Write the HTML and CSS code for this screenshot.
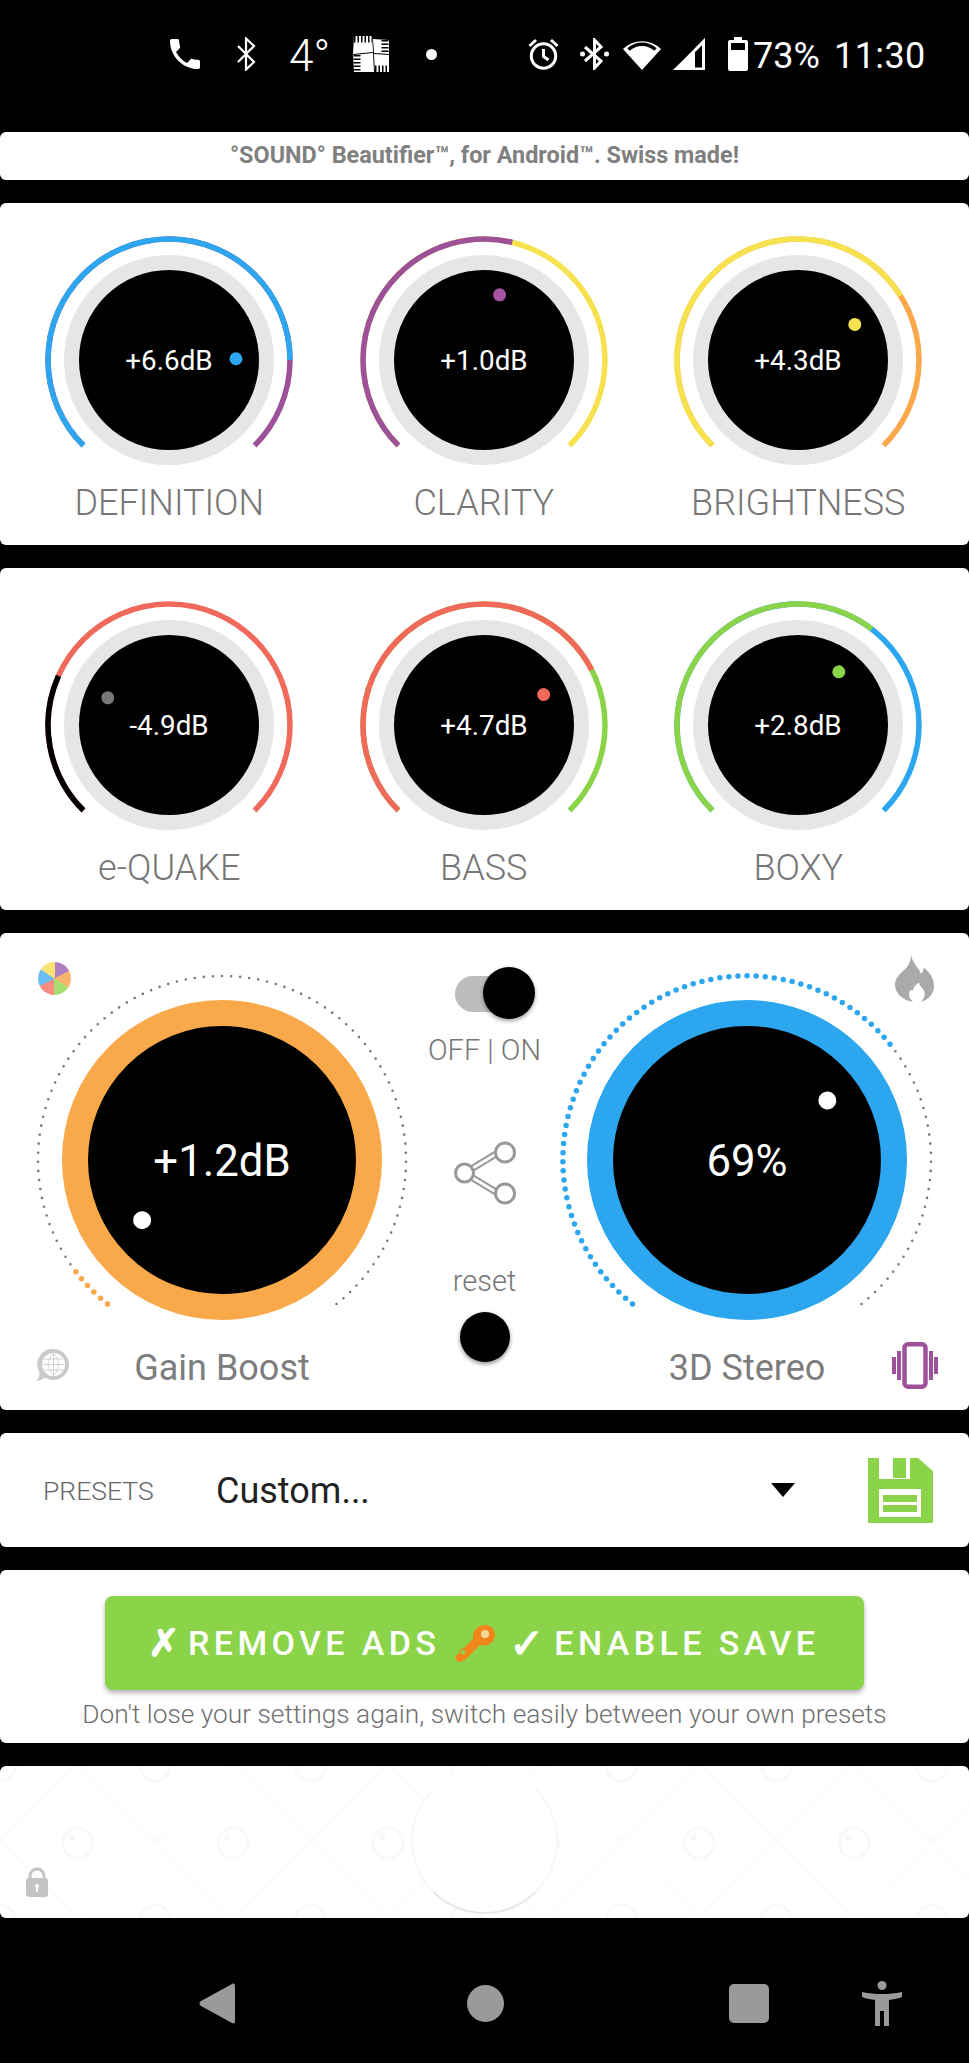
FILE: index.html
```html
<!DOCTYPE html>
<html lang="en">
<head>
<meta charset="utf-8">
<title>SOUND Beautifier</title>
<link rel="stylesheet" href="styles.css">
</head>
<body>
<header class="status">
  <svg class="st-phone" viewBox="3 3 18 18" width="30" height="30"><path class="w" d="M6.62 10.79c1.44 2.83 3.76 5.14 6.59 6.59l2.2-2.2c.27-.27.67-.36 1.02-.24 1.12.37 2.33.57 3.57.57.55 0 1 .45 1 1V20c0 .55-.45 1-1 1-9.39 0-17-7.61-17-17 0-.55.45-1 1-1h3.5c.55 0 1 .45 1 1 0 1.25.2 2.45.57 3.57.11.35.03.74-.25 1.02l-2.2 2.2z"/></svg>
  <svg class="st-bt" viewBox="0 0 19 34" width="19" height="34"><path class="wl" d="M1 9 L17 25 L9 32.5 V1.5 L17 9 L1 25"/></svg>
  <span class="st-temp">4°</span>
  <svg class="st-quilt" viewBox="0 0 36 36" width="36" height="36">
    <path class="w" d="M1 0 H19 L20 16 L0 18Z"/><path class="w" d="M20 3 L36 4 V18 L21 17Z"/><path class="w" d="M0 19 L20 17 L21 36 H1Z"/><path class="w" d="M21 18 L36 19 V36 H22Z"/>
    <path class="fringe" d="M1 3 H19 M32 4 V18 M4 19 V35 M22 33 H36"/>
  </svg>
  <span class="st-dot"></span>
  <svg class="st-alarm" viewBox="0 0 31 32" width="31" height="32"><circle class="wl3" cx="15.5" cy="18" r="12.2"/><path class="wl3" d="M15.5 11 V18.5 L20.5 22 M1.5 8 L8 2 M29.5 8 L23 2"/></svg>
  <svg class="st-btc" viewBox="0 0 29 32" width="29" height="32"><path class="wl3" d="M5 9 L21 23 L14.5 30 V2 L21 9 L5 23"/><circle class="w" cx="2.5" cy="16" r="2.5"/><circle class="w" cx="26.5" cy="16" r="2.5"/></svg>
  <svg class="st-wifi" viewBox="0 0 38 32" width="38" height="32"><path class="w" d="M0 11 A27 27 0 0 1 38 11 L19 32Z"/><path class="gap" d="M5.5 11.5 A20 20 0 0 1 32.500 11.5"/></svg>
  <svg class="st-signal" viewBox="0 0 32 32" width="32" height="32"><path class="wl2" d="M30.500 3.500 V31 H3.500Z"/><path class="w" d="M22 11 V32 H0Z"/></svg>
  <svg class="st-batt" viewBox="0 0 20 34" width="20" height="34"><path class="w" d="M6 0 H14 V3 H18 A2 2 0 0 1 20 5 V32 A2 2 0 0 1 18 34 H2 A2 2 0 0 1 0 32 V5 A2 2 0 0 1 2 3 H6Z"/><rect class="blk" x="3" y="6" width="14" height="7"/></svg>
  <span class="st-pct">73%</span>
  <span class="st-time">11:30</span>
</header>

<main class="cards">
  <div class="card banner">°SOUND° Beautifier™, for Android™. Swiss made!</div>

  <section class="card knobs">
    <div class="knob">
      <svg viewBox="-125 -125 250 250" width="250" height="250">
        <path class="arc c-purple" d="M-85.56 85.56 A121 121 0 1 1 85.56 85.56"/>
        <path class="arc c-blue" pathLength="270" stroke-dasharray="225 999" d="M-85.56 85.56 A121 121 0 1 1 85.56 85.56"/>
        <circle class="ring" r="97.500"/>
        <text class="val" y="9.500">+6.6dB</text>
        <circle class="f-blue" cy="-67" r="6.500" transform="rotate(89)"/>
      </svg>
      <div class="name">DEFINITION</div>
    </div>
    <div class="knob">
      <svg viewBox="-125 -125 250 250" width="250" height="250">
        <path class="arc c-yellow" d="M-85.56 85.56 A121 121 0 1 1 85.56 85.56"/>
        <path class="arc c-purple" pathLength="270" stroke-dasharray="148.500 999" d="M-85.56 85.56 A121 121 0 1 1 85.56 85.56"/>
        <circle class="ring" r="97.500"/>
        <text class="val" y="9.500">+1.0dB</text>
        <circle class="f-purple" cy="-67" r="6.500" transform="rotate(13.500)"/>
      </svg>
      <div class="name">CLARITY</div>
    </div>
    <div class="knob">
      <svg viewBox="-125 -125 250 250" width="250" height="250">
        <path class="arc c-orange" d="M-85.56 85.56 A121 121 0 1 1 85.56 85.56"/>
        <path class="arc c-yellow" pathLength="270" stroke-dasharray="193 999" d="M-85.56 85.56 A121 121 0 1 1 85.56 85.56"/>
        <circle class="ring" r="97.500"/>
        <text class="val" y="9.500">+4.3dB</text>
        <circle class="f-yellow" cy="-67" r="6.500" transform="rotate(58)"/>
      </svg>
      <div class="name">BRIGHTNESS</div>
    </div>
  </section>

  <section class="card knobs">
    <div class="knob">
      <svg viewBox="-125 -125 250 250" width="250" height="250">
        <path class="arc c-red" d="M-85.56 85.56 A121 121 0 1 1 85.56 85.56"/>
        <path class="arc c-black" pathLength="270" stroke-dasharray="69 999" d="M-85.56 85.56 A121 121 0 1 1 85.56 85.56"/>
        <circle class="ring" r="97.500"/>
        <text class="val" y="9.500">-4.9dB</text>
        <circle class="f-grey" cy="-67" r="6.500" transform="rotate(-66)"/>
      </svg>
      <div class="name">e-QUAKE</div>
    </div>
    <div class="knob">
      <svg viewBox="-125 -125 250 250" width="250" height="250">
        <path class="arc c-green" d="M-85.56 85.56 A121 121 0 1 1 85.56 85.56"/>
        <path class="arc c-red" pathLength="270" stroke-dasharray="198 999" d="M-85.56 85.56 A121 121 0 1 1 85.56 85.56"/>
        <circle class="ring" r="97.500"/>
        <text class="val" y="9.500">+4.7dB</text>
        <circle class="f-red" cy="-67" r="6.500" transform="rotate(63)"/>
      </svg>
      <div class="name">BASS</div>
    </div>
    <div class="knob">
      <svg viewBox="-125 -125 250 250" width="250" height="250">
        <path class="arc c-blue" d="M-85.56 85.56 A121 121 0 1 1 85.56 85.56"/>
        <path class="arc c-green" pathLength="270" stroke-dasharray="172.500 999" d="M-85.56 85.56 A121 121 0 1 1 85.56 85.56"/>
        <circle class="ring" r="97.500"/>
        <text class="val" y="9.500">+2.8dB</text>
        <circle class="f-green" cy="-67" r="6.500" transform="rotate(37.500)"/>
      </svg>
      <div class="name">BOXY</div>
    </div>
  </section>

  <section class="card main">
    <span class="pie"></span>
    <svg class="flame" viewBox="0 0 39 47" width="39" height="47"><path class="f-flame" d="M16 0 C18 9 24 13 26 19 C28 17 28.500 15 28.500 12.500 C35 17 39 24 39 31 C39 38 35 44 26 47 C30.500 42 31 37 27 33 C25.500 31.500 24.500 30 24 27.500 C20 30 18 33 18 35.500 C15 34 14 37 14 39 C14 42 16 45 18 47 C7 45 0 38 0 30 C0 21 8 17 12 12 C14.500 8.500 16 5 16 0Z"/></svg>
    <svg class="globe" viewBox="0 0 33 32" width="33" height="32">
      <path class="f-globe" d="M17.500 0 A15.500 15.500 0 1 1 9 28.500 C6 31 3 32 0 32 C2.500 30 3.500 27.500 3.500 23.500 A15.500 15.500 0 0 1 17.500 0Z"/>
      <circle class="f-white" cx="17.500" cy="15.500" r="11.500"/>
      <path class="globe-grid" d="M6.500 15.500 H28.500 M8 10 H27 M8 21 H27 M17.500 4.500 V26.500 M17.500 4.500 C11 9 11 22 17.500 26.500 M17.500 4.500 C24 9 24 22 17.500 26.500"/>
    </svg>
    <svg class="vibe" viewBox="0 0 46 47" width="46" height="47"><rect class="vibe-phone" x="12.500" y="2.250" width="21" height="42.500" rx="3.500"/><path class="vibe-bars" d="M7 9 V38 M2 15 V32 M39 9 V38 M44 15 V32"/></svg>

    <div class="big">
      <svg viewBox="-190 -190 380 380" width="380" height="380">
        <path class="tick" pathLength="100" d="M-114.500 144 A184 184 0 1 1 114.500 144"/>
        <path class="tick-on c-orange" pathLength="5" d="M-114.500 144 A184 184 0 0 1 -146.200 111.700"/>
        <circle class="big-ring c-orange" r="147"/>
        <text class="big-val" y="16">+1.2dB</text>
        <circle class="f-white" cy="-100" r="9" transform="rotate(-127)"/>
      </svg>
      <div class="big-name">Gain Boost</div>
    </div>

    <div class="mid">
      <div class="toggle"><span class="track"></span><span class="thumb"></span></div>
      <div class="mid-label onoff">OFF | ON</div>
      <svg class="share" viewBox="0 0 62 64" width="62" height="64">
        <path class="share-edge" d="M18 27.500 L42 13 M18 36.500 L42 51"/>
        <path class="share-core" d="M18 27.500 L42 13 M18 36.500 L42 51"/>
        <circle class="share-node" cx="10.500" cy="32" r="9"/><circle class="share-node" cx="51" cy="11.500" r="9.500"/><circle class="share-node" cx="51" cy="52.500" r="9.500"/>
      </svg>
      <div class="mid-label reset">reset</div>
      <span class="reset-btn"></span>
    </div>

    <div class="big">
      <svg viewBox="-190 -190 380 380" width="380" height="380">
        <path class="tick" pathLength="100" d="M-114.500 144 A184 184 0 1 1 114.500 144"/>
        <path class="tick-on c-blue" pathLength="69" d="M-114.500 144 A184 184 0 1 1 148.500 -108.600"/>
        <circle class="big-ring c-blue" r="147"/>
        <text class="big-val" y="16">69%</text>
        <circle class="f-white" cy="-100" r="9" transform="rotate(53.500)"/>
      </svg>
      <div class="big-name">3D Stereo</div>
    </div>
  </section>

  <section class="card presets">
    <span class="presets-label">PRESETS</span>
    <span class="presets-value">Custom...</span>
    <span class="caret"></span>
    <svg class="floppy" viewBox="0 0 65 65" width="65" height="65">
      <path class="f-green" d="M0 0 H50 L65 13 V65 H0Z"/>
      <path class="f-white" d="M11 0 H42 V21 H11Z"/>
      <rect class="f-green" x="25" y="0" width="13" height="20"/>
      <rect class="f-white" x="11" y="31" width="42" height="28"/>
      <rect class="f-green" x="15" y="37" width="34" height="7"/>
      <rect class="f-green" x="15" y="47" width="34" height="7"/>
    </svg>
  </section>

  <section class="card upsell">
    <div class="buy">
      <span class="glyph glyph-x">✗</span>
      <span class="buy-text">REMOVE ADS</span>
      <svg class="key" viewBox="0 0 41 38" width="41" height="38"><path class="key-fill" d="M1 33 L19 15 C18 7 24 1 31 1 C37 1 41 5 41 11 C41 18 34 23 26 21 L11 36 L6 38 L3 37Z M5 27 L9 31 L12 28 L8 24Z"/><circle class="key-hole" cx="31" cy="10" r="4"/></svg>
      <span class="glyph glyph-check">✓</span>
      <span class="buy-text">ENABLE SAVE</span>
    </div>
    <p class="upsell-note">Don't lose your settings again, switch easily between your own presets</p>
  </section>

  <section class="card ad">
    <svg class="ad-art" width="969" height="152" viewBox="0 0 969 152">
      <defs>
        <pattern id="tile" width="155.300" height="154" patternUnits="userSpaceOnUse" y="0" x="0">
          <path class="tile-line" d="M0 75 L77.650 152 L155.300 75 M0 75 L75 0 M155.300 75 L80 0"/>
          <ellipse class="tile-ring" cx="77.650" cy="77" rx="15" ry="15"/>
          <circle class="tile-dot" cx="72" cy="72" r="3"/>
          <ellipse class="tile-ring" cx="0" cy="0" rx="15" ry="15"/>
          <ellipse class="tile-ring" cx="155.300" cy="0" rx="15" ry="15"/>
          <ellipse class="tile-ring" cx="0" cy="154" rx="15" ry="15"/>
          <ellipse class="tile-ring" cx="155.300" cy="154" rx="15" ry="15"/>
        </pattern>
      </defs>
      <rect width="969" height="152" fill="url(#tile)"/>
    </svg>
    <span class="ad-circle"></span>
    <svg class="lock" viewBox="0 0 22 30" width="22" height="30"><path class="lock-arc" d="M4 13 V9 A7 7 0 0 1 18 9 V13"/><rect class="lock-body" x="0" y="11" width="22" height="19" rx="3"/><circle class="f-white" cx="11" cy="19" r="2"/><rect class="f-white" x="10" y="19" width="2" height="6"/></svg>
  </section>
</main>

<nav class="navbar">
  <svg class="nav-back" viewBox="0 0 36 41" width="36" height="41"><path class="f-nav" d="M33 1 C35 0 36 1 36 3 V38 C36 40 35 41 33 40 L2 23 C0 22 0 19 2 18Z"/></svg>
  <span class="nav-home"></span>
  <span class="nav-square"></span>
  <svg class="nav-acc" viewBox="0 0 40 45" width="40" height="45"><circle class="f-nav" cx="20" cy="4.500" r="4.500"/><path class="f-nav" d="M0 11 C7 12.500 13 13 20 13 C27 13 33 12.500 40 11 L40 16 C35 18 31 18.500 27 19 V45 H22 V30 H18 V45 H13 V19 C9 18.500 5 18 0 16Z"/></svg>
</nav>
</body>
</html>
```

FILE: styles.css
```css
* { box-sizing: border-box; }
html, body { margin: 0; padding: 0; }
body { width: 969px; height: 2063px; background: #000; font-family: Roboto, "Liberation Sans", sans-serif; color: #7d7d7d; overflow: hidden; }

/* status bar */
.status { height: 132px; padding: 0 0 24px 170px; display: flex; align-items: center; color: #fff; }
.status svg { flex: none; display: block; }
.w { fill: #fff; }
.blk { fill: #000; }
.gap { fill: none; stroke: #000; stroke-width: 3.5; }
.wl, .wl2, .wl3 { fill: none; stroke: #fff; stroke-linejoin: miter; }
.wl { stroke-width: 2.2; }
.wl2 { stroke-width: 3; }
.wl3 { stroke-width: 3; }
.fringe { fill: none; stroke: #000; stroke-width: 7; stroke-dasharray: 1.500 2; }
.st-bt { margin-left: 37px; }
.st-temp { margin: 4px 0 0 33px; width: 38px; font-size: 44px; font-weight: 300; line-height: 44px; }
.st-quilt { margin-left: 26px; }
.st-dot { margin-left: 37px; width: 11px; height: 11px; border-radius: 50%; background: #fff; }
.st-alarm { margin-left: 91px; }
.st-btc { margin-left: 21px; }
.st-wifi { margin-left: 14px; }
.st-signal { margin-left: 12px; }
.st-batt { margin-left: 23px; }
.st-pct { margin: 4px 0 0 5px; font-size: 36px; line-height: 40px; width: 81px; }
.st-time { margin-top: 4px; font-size: 36px; line-height: 40px; letter-spacing: .4px; }

/* cards */
.cards { display: flex; flex-direction: column; gap: 23px; }
.card { background: #fff; border-radius: 6px; position: relative; }
.banner { height: 48px; line-height: 47px; text-align: center; font-size: 23.400px; font-weight: 700; color: #808080; }

/* small knobs */
.knobs { height: 342px; padding: 31.500px 12px 0; display: grid; grid-template-columns: repeat(3, 314.500px); }
.knob { display: flex; flex-direction: column; align-items: center; }
.knob svg { display: block; flex: none; }
.arc { fill: none; stroke-width: 5.500; }
.c-blue { stroke: #2ca6ee; }
.c-purple { stroke: #9c5199; }
.c-yellow { stroke: #f6e24f; }
.c-orange { stroke: #f9a84a; }
.c-red { stroke: #f0695a; }
.c-green { stroke: #8bd44a; }
.c-black { stroke: #000; }
.f-blue { fill: #2ca6ee; }
.f-purple { fill: #a755a3; }
.f-yellow { fill: #f6e24f; }
.f-red { fill: #f0695a; }
.f-green { fill: #8bd44a; }
.f-grey { fill: #777; }
.f-white { fill: #fff; }
.ring { fill: #000; stroke: #e6e6e6; stroke-width: 15; }
.val { fill: #fff; font-size: 27.800px; text-anchor: middle; }
.name { font-size: 36px; line-height: 36px; font-weight: 300; color: #777; }

/* main card */
.main { height: 477px; padding: 34px 32px 0; display: grid; grid-template-columns: 380px 145px 380px; align-items: start; }
.big { padding-top: 2.500px; display: flex; flex-direction: column; align-items: center; }
.big svg { display: block; }
.tick { fill: none; stroke: #777; stroke-width: 2.600; stroke-linecap: round; stroke-dasharray: 0 1; }
.tick-on { fill: none; stroke-width: 5.500; stroke-linecap: round; stroke-dasharray: 0 1; }
.big-ring { fill: #000; stroke-width: 26; }
.big-val { fill: #fff; font-size: 43.700px; text-anchor: middle; }
.big-name { margin-top: -1.500px; font-size: 36px; line-height: 40px; color: #7d7d7d; }

.mid { display: flex; flex-direction: column; align-items: center; }
.toggle { position: relative; width: 80px; height: 52px; margin-left: 21px; flex: none; }
.track { position: absolute; left: 0; top: 9px; width: 70px; height: 36px; border-radius: 18px; background: #bdbdbd; }
.thumb { position: absolute; right: 0; top: 0; width: 52px; height: 52px; border-radius: 50%; background: #000; box-shadow: 0 2px 4px rgba(0,0,0,.4); }
.mid-label { font-size: 29px; line-height: 32px; font-weight: 300; color: #777; white-space: nowrap; }
.onoff { margin-top: 15px; }
.share { margin-top: 75px; flex: none; display: block; }
.share-edge { fill: none; stroke: #999; stroke-width: 7; }
.share-core { fill: none; stroke: #fff; stroke-width: 3; }
.share-node { fill: #fff; stroke: #999; stroke-width: 3; }
.reset { margin-top: 60px; }
.reset-btn { margin-top: 15px; width: 50px; height: 50px; border-radius: 50%; background: #000; box-shadow: 0 2px 4px rgba(0,0,0,.45); flex: none; }

.pie { position: absolute; left: 38px; top: 29px; width: 33px; height: 33px; border-radius: 50%; background: conic-gradient(from 3deg, #b07fc0 0 60deg, #fbb46c 60deg 120deg, #a9de74 120deg 180deg, #f98b7f 180deg 240deg, #6bbdf3 240deg 300deg, #fae374 300deg 360deg); }
.flame { position: absolute; left: 895px; top: 22px; }
.f-flame { fill: #aaa; }
.globe { position: absolute; left: 36px; top: 416px; }
.f-globe { fill: #cacaca; }
.globe-grid { fill: none; stroke: #d2d2d2; stroke-width: 1; }
.vibe { position: absolute; left: 892px; top: 409px; }
.vibe-phone { fill: none; stroke: #9c5199; stroke-width: 4.500; }
.vibe-bars { fill: none; stroke: #9c5199; stroke-width: 4; }

/* presets */
.presets { height: 114px; display: flex; align-items: center; padding-left: 43px; }
.presets-label { font-size: 26.500px; font-weight: 300; color: #666; width: 173px; }
.presets-value { font-size: 36px; color: #222; width: 555px; margin-top: 2px; }
.caret { width: 0; height: 0; border-left: 12px solid transparent; border-right: 12px solid transparent; border-top: 14px solid #000; }
.floppy { margin-left: 73px; display: block; }

/* upsell */
.upsell { height: 173px; padding-top: 26px; display: flex; flex-direction: column; align-items: center; }
.buy { width: 759px; height: 94px; padding-left: 43px; border-radius: 8px; background: #8bd44a; box-shadow: 0 3px 5px rgba(0,0,0,.3); display: flex; align-items: center; color: #fff; font-weight: 500; white-space: nowrap; }
.buy-text { font-size: 34px; letter-spacing: 4.400px; }
.glyph { font-family: "DejaVu Sans", sans-serif; font-weight: 700; -webkit-text-stroke: 1.200px #fff; }
.glyph-x { font-size: 38px; width: 40px; }
.glyph-check { font-size: 42px; width: 45px; }
.key { display: block; flex: none; margin: 0 14px 0 14px; }
.key-fill { fill: #f0861a; fill-rule: evenodd; }
.key-hole { fill: #f6d99a; }
.upsell-note { margin: 9px 0 0; font-size: 26.300px; line-height: 30px; font-weight: 300; color: #6f6f6f; white-space: nowrap; }

/* ad strip */
.ad { height: 152px; overflow: hidden; }
.ad-art { position: absolute; left: 0; top: 0; display: block; }
.tile-line { fill: none; stroke: #f9f9f9; stroke-width: 1.500; }
.tile-ring { fill: none; stroke: #f8f8f8; stroke-width: 3; }
.tile-dot { fill: #f7f7f7; }
.ad-circle { position: absolute; left: 411px; top: 1px; width: 147px; height: 147px; border-radius: 50%; background: #fff; border: 2px solid #f7f7f7; border-top-color: #fff; border-bottom-color: #e6e6e6; }
.lock { position: absolute; left: 26px; top: 101px; }
.lock-arc { fill: none; stroke: #c4c4c4; stroke-width: 3; }
.lock-body { fill: #c4c4c4; }

/* navigation */
.navbar { height: 146px; display: flex; align-items: center; padding: 25px 0 0 199px; }
.navbar svg { display: block; flex: none; }
.f-nav { fill: #9a9a9a; }
.nav-home { margin-left: 232px; width: 37px; height: 37px; border-radius: 50%; background: #9a9a9a; flex: none; }
.nav-square { margin-left: 225px; width: 40px; height: 39px; border-radius: 5px; background: #9a9a9a; flex: none; }
.nav-acc { margin-left: 93px; }
```
